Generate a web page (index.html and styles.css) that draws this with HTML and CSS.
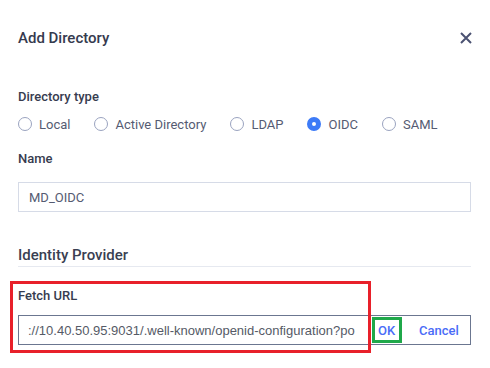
FILE: index.html
```html
<!DOCTYPE html>
<html lang="en">
<head>
    <meta charset="UTF-8">
    <meta name="viewport" content="width=device-width, initial-scale=1.0">
    <title>Add Directory</title>
    <link rel="stylesheet" href="styles.css">
</head>
<body>
    <div class="dialog">
        <div class="dialog-header">
            <h2>Add Directory</h2>
            <button class="close" aria-label="Close">
                <svg width="12" height="12" viewBox="0 0 12 12">
                    <path d="M1 1 L11 11 M11 1 L1 11" stroke="#4b5272" stroke-width="2" fill="none"/>
                </svg>
            </button>
        </div>

        <div class="field field-type">
            <div class="label">Directory type</div>
            <div class="radio-row">
                <label class="radio"><span class="dot"></span>Local</label>
                <label class="radio"><span class="dot"></span>Active Directory</label>
                <label class="radio"><span class="dot"></span>LDAP</label>
                <label class="radio checked"><span class="dot"></span>OIDC</label>
                <label class="radio"><span class="dot"></span>SAML</label>
            </div>
        </div>

        <div class="field field-name">
            <div class="label">Name</div>
            <div class="input">MD_OIDC</div>
        </div>

        <h3>Identity Provider</h3>

        <div class="field fetch">
            <div class="label">Fetch URL</div>
            <div class="input input-group">
                <span class="url">://10.40.50.95:9031/.well-known/openid-configuration?po</span>
                <span class="btn ok">OK</span>
                <span class="btn">Cancel</span>
            </div>
            <div class="mark-red"></div>
        </div>
    </div>
</body>
</html>
```

FILE: styles.css
```css
body {
    margin: 0;
    background: #fff;
    font-family: Roboto, "Noto Sans", sans-serif;
    color: #373c4f;
}
.dialog {
    width: 490px;
    height: 368px;
    padding: 0 19px 0 18px;
    box-sizing: border-box;
    overflow: hidden;
}
.dialog-header {
    display: flex;
    justify-content: space-between;
    align-items: center;
    height: 20px;
    margin-top: 28px;
}
h2 {
    margin: 0;
    font-size: 15px;
    font-weight: 500;
    line-height: 20px;
    color: #353a4e;
}
.close {
    border: none;
    background: none;
    padding: 0;
    margin-right: -1px;
    width: 12px;
    height: 12px;
    display: flex;
}
.field {
    margin-top: 14px;
}
.field-type {
    margin-top: 40px;
}
.field-name {
    margin-top: 16px;
}
.label {
    font-size: 13px;
    font-weight: 500;
    line-height: 18px;
    color: #373c4f;
}
.radio-row {
    display: flex;
    gap: 24px;
    margin-top: 8px;
    height: 20px;
    align-items: center;
}
.radio {
    display: flex;
    align-items: center;
    gap: 7px;
    font-size: 13px;
    color: #555b72;
}
.dot {
    width: 14px;
    height: 14px;
    border: 1px solid #9aa3bf;
    border-radius: 50%;
    box-sizing: border-box;
}
.radio.checked .dot {
    border: 5px solid #3d7bf7;
}
.input {
    margin-top: 14px;
    height: 30px;
    box-sizing: border-box;
    border: 1px solid #d6dbe7;
    padding: 0 10px;
    display: flex;
    align-items: center;
    font-size: 13px;
    color: #555b72;
}
h3 {
    margin: 33px 0 0;
    font-size: 15px;
    font-weight: 500;
    line-height: 20px;
    padding-bottom: 1px;
    border-bottom: 1px solid #e6e9f0;
    color: #3a3f52;
}
.fetch {
    position: relative;
    margin-top: 20px;
}
.fetch .input {
    margin-top: 10px;
}
.input-group {
    border-color: #6b7690;
    padding: 0 0 0 9px;
}
.url {
    font-family: "Liberation Sans", Arial, sans-serif;
    color: #555a66;
    width: 344px;
    white-space: nowrap;
}
.btn {
    color: #4a6cf7;
    font-size: 13px;
    font-weight: 500;
    padding: 0 7px;
}
.btn.ok {
    height: 26px;
    width: 30px;
    box-sizing: border-box;
    border: 3px solid #1fa84a;
    display: flex;
    align-items: center;
    padding: 0 0 0 3px;
    margin-right: 10px;
}
.mark-red {
    position: absolute;
    left: -8px;
    top: -6px;
    width: 361px;
    height: 72px;
    border: 3px solid #e8202a;
    box-sizing: border-box;
    pointer-events: none;
}
```
